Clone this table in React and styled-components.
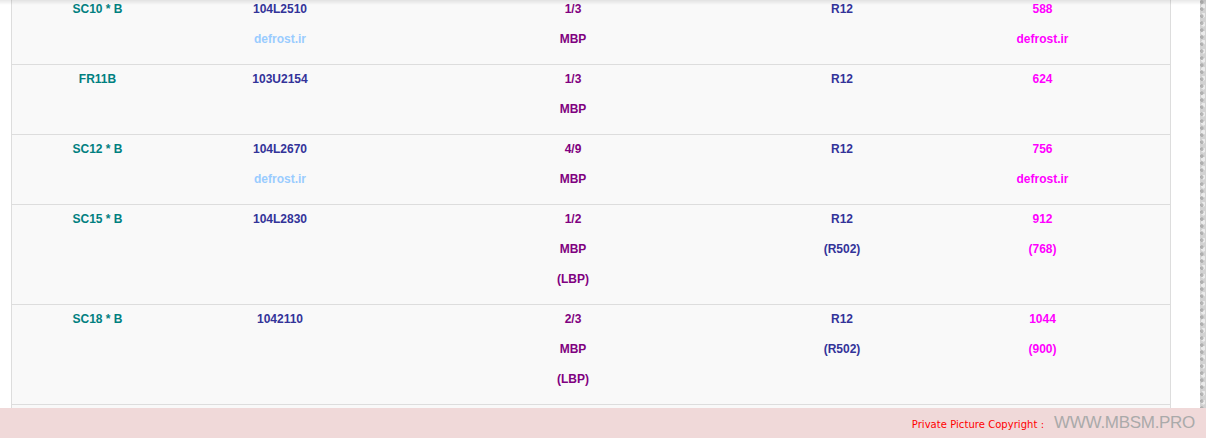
import React from "react";
import styled, { createGlobalStyle } from "styled-components";

const Global = createGlobalStyle`
  html, body { margin: 0; padding: 0; }
  body {
    font-family: "Liberation Sans", Arial, sans-serif;
    background-color: #d2d2d2;
    background-image:
      radial-gradient(circle at 30% 30%, rgba(160,160,160,0.7) 0 1.5px, transparent 2px),
      radial-gradient(circle at 70% 70%, rgba(240,240,240,0.8) 0 2px, transparent 2.5px);
    background-size: 6px 7px, 5px 9px;
    overflow: hidden;
  }
`;

const Page = styled.div`
  width: 1200px;
  background: #ffffff;
  padding-left: 11px;
  box-sizing: border-box;
`;

const Table = styled.div`
  width: 1160px;
  margin-top: -5px;
  background: #f9f9f9;
  border-left: 1px solid #dddddd;
  border-right: 1px solid #dddddd;
  box-sizing: border-box;
`;

const Row = styled.div`
  display: grid;
  grid-template-columns: 171px 194px 392px 146px 255px;
  border-bottom: 1px solid #dddddd;
  padding: 4px 0 15px;
  min-height: ${(p) => p.$minH || 0}px;
  box-sizing: border-box;
`;

const Cell = styled.div`
  display: flex;
  flex-direction: column;
  align-items: center;
  gap: 10px;
`;

const Line = styled.span`
  display: block;
  font-size: 12px;
  font-weight: bold;
  line-height: 20px;
  color: ${(p) => p.$c};
  white-space: nowrap;
`;

const TopShade = styled.div`
  position: fixed;
  top: 0;
  left: 0;
  right: 0;
  height: 5px;
  background: linear-gradient(rgba(0, 0, 0, 0.09), rgba(0, 0, 0, 0));
  pointer-events: none;
`;

const Watermark = styled.div`
  position: fixed;
  left: 0;
  right: 0;
  bottom: 0;
  height: 30px;
  background: #f0d9d9;
  display: flex;
  align-items: center;
  justify-content: flex-end;
  padding-right: 11px;
  gap: 10px;
`;

const Copy = styled.span`
  font-family: "DejaVu Sans", Verdana, sans-serif;
  font-size: 10px;
  letter-spacing: 0.05px;
  color: #ff0000;
  padding-top: 3px;
`;

const Site = styled.span`
  font-family: "Liberation Sans", Arial, sans-serif;
  font-size: 17px;
  color: #aaaaaa;
  letter-spacing: -0.3px;
`;

const C = {
  teal: "#008080",
  blue: "#333399",
  light: "#99ccff",
  purple: "#800080",
  pink: "#ff00ff",
};

const rows = [
  [
    [["SC10 * B", C.teal]],
    [["104L2510", C.blue], ["defrost.ir", C.light]],
    [["1/3", C.purple], ["MBP", C.purple]],
    [["R12", C.blue]],
    [["588", C.pink], ["defrost.ir", C.pink]],
  ],
  [
    [["FR11B", C.teal]],
    [["103U2154", C.blue]],
    [["1/3", C.purple], ["MBP", C.purple]],
    [["R12", C.blue]],
    [["624", C.pink]],
  ],
  [
    [["SC12 * B", C.teal]],
    [["104L2670", C.blue], ["defrost.ir", C.light]],
    [["4/9", C.purple], ["MBP", C.purple]],
    [["R12", C.blue]],
    [["756", C.pink], ["defrost.ir", C.pink]],
  ],
  [
    [["SC15 * B", C.teal]],
    [["104L2830", C.blue]],
    [["1/2", C.purple], ["MBP", C.purple], ["(LBP)", C.purple]],
    [["R12", C.blue], ["(R502)", C.blue]],
    [["912", C.pink], ["(768)", C.pink]],
  ],
  [
    [["SC18 * B", C.teal]],
    [["1042110", C.blue]],
    [["2/3", C.purple], ["MBP", C.purple], ["(LBP)", C.purple]],
    [["R12", C.blue], ["(R502)", C.blue]],
    [["1044", C.pink], ["(900)", C.pink]],
  ],
];

export default function App() {
  return (
    <>
      <Global />
      <Page>
        <Table>
          {rows.map((r, i) => (
            <Row key={i}>
              {r.map((cell, j) => (
                <Cell key={j}>
                  {cell.map(([t, c], k) => (
                    <Line key={k} $c={c}>
                      {t}
                    </Line>
                  ))}
                </Cell>
              ))}
            </Row>
          ))}
          <Row $minH={34} />
        </Table>
      </Page>
      <TopShade />
      <Watermark>
        <Copy>Private Picture Copyright :</Copy>
        <Site>WWW.MBSM.PRO</Site>
      </Watermark>
    </>
  );
}
